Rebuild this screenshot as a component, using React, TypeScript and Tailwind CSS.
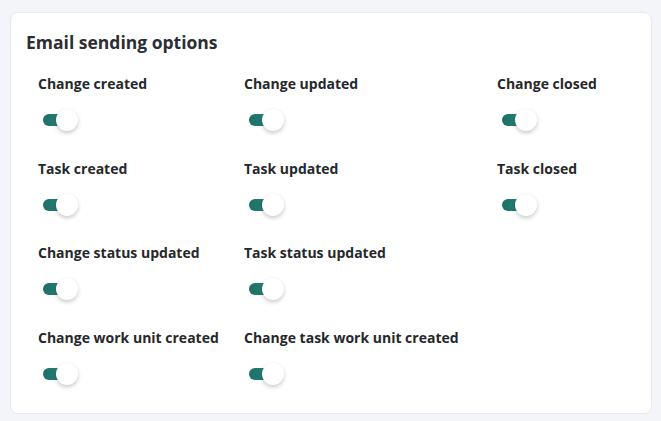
const OPTIONS: (string | null)[] = [
  'Change created',
  'Change updated',
  'Change closed',
  'Task created',
  'Task updated',
  'Task closed',
  'Change status updated',
  'Task status updated',
  null,
  'Change work unit created',
  'Change task work unit created',
  null,
];

function Toggle() {
  return (
    <div className="relative w-[36px] h-[24px]">
      <div className="absolute left-0 top-[6px] w-[26px] h-[12px] rounded-full bg-gradient-to-r from-[#1d6f66] to-[#2a8a7d]" />
      <div className="absolute left-[13px] top-[1px] w-[22px] h-[22px] rounded-full bg-white shadow-[0_2px_4px_rgba(0,0,0,0.22)]" />
    </div>
  );
}

export default function App() {
  return (
    <div className="w-[661px] h-[421px] bg-[#f4f5f8] pt-[12px] pl-[10px] pr-[9px] font-['Open_Sans',sans-serif]">
      <div className="h-[402px] bg-white border border-[#e8e9ee] rounded-[8px] pl-[15px] pt-[17px]">
        <h2 className="text-[17.5px] leading-[24px] font-bold text-[#2b2e33]">Email sending options</h2>
        <div className="grid grid-cols-[206px_253px_1fr] gap-y-[26.7px] pl-[12px] mt-[20px]">
          {OPTIONS.map((label, i) =>
            label ? (
              <div key={i} className="flex flex-col">
                <span className="text-[14px] leading-[20px] font-bold text-[#26282b]">{label}</span>
                <div className="mt-[14px] ml-[5px]">
                  <Toggle />
                </div>
              </div>
            ) : (
              <div key={i} />
            )
          )}
        </div>
      </div>
    </div>
  );
}
